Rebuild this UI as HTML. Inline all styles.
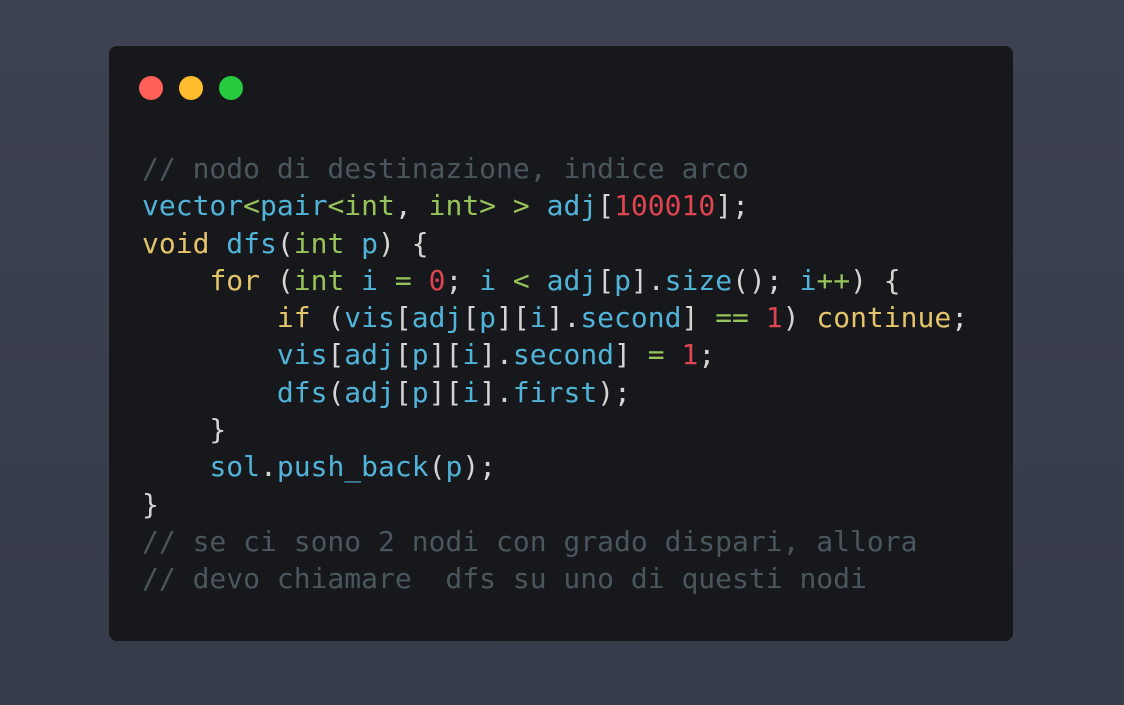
<!DOCTYPE html>
<html><head><style>
html,body{margin:0;width:1124px;height:705px;overflow:hidden;background:linear-gradient(180deg,#3d4252,#363b4a);}
.win{position:absolute;left:109px;top:46px;width:904px;height:595px;background:#17181b;border-radius:8px;}
.d{position:absolute;top:76px;width:24px;height:24px;border-radius:50%;}
pre{position:absolute;left:142px;top:150px;margin:0;font-family:"DejaVu Sans Mono","Liberation Mono",monospace;font-size:28px;line-height:37.3px;color:#d4d4d4;}
.b{color:#52b3d9}.g{color:#98c35a}.y{color:#e4c46a}.r{color:#df4450}.c{color:#4a565d}
</style></head><body>
<div class="win"></div>
<div class="d" style="left:139px;background:#ff5f56"></div>
<div class="d" style="left:179px;background:#ffbd2e"></div>
<div class="d" style="left:219px;background:#27c93f"></div>
<pre><span class="c">// nodo di destinazione, indice arco</span>
<span class="b">vector</span><span class="g">&lt;</span><span class="b">pair</span><span class="g">&lt;int</span>, <span class="g">int&gt;</span> <span class="g">&gt;</span> <span class="b">adj</span>[<span class="r">100010</span>];
<span class="y">void</span> <span class="b">dfs</span>(<span class="g">int</span> <span class="b">p</span>) {
    <span class="y">for</span> (<span class="g">int</span> <span class="b">i</span> <span class="g">=</span> <span class="r">0</span>; <span class="b">i</span> <span class="g">&lt;</span> <span class="b">adj</span>[<span class="b">p</span>].<span class="b">size</span>(); <span class="b">i</span><span class="g">++</span>) {
        <span class="y">if</span> (<span class="b">vis</span>[<span class="b">adj</span>[<span class="b">p</span>][<span class="b">i</span>].<span class="b">second</span>] <span class="g">==</span> <span class="r">1</span>) <span class="y">continue</span>;
        <span class="b">vis</span>[<span class="b">adj</span>[<span class="b">p</span>][<span class="b">i</span>].<span class="b">second</span>] <span class="g">=</span> <span class="r">1</span>;
        <span class="b">dfs</span>(<span class="b">adj</span>[<span class="b">p</span>][<span class="b">i</span>].<span class="b">first</span>);
    }
    <span class="b">sol</span>.<span class="b">push_back</span>(<span class="b">p</span>);
}
<span class="c">// se ci sono 2 nodi con grado dispari, allora</span>
<span class="c">// devo chiamare  dfs su uno di questi nodi</span></pre>
</body></html>
